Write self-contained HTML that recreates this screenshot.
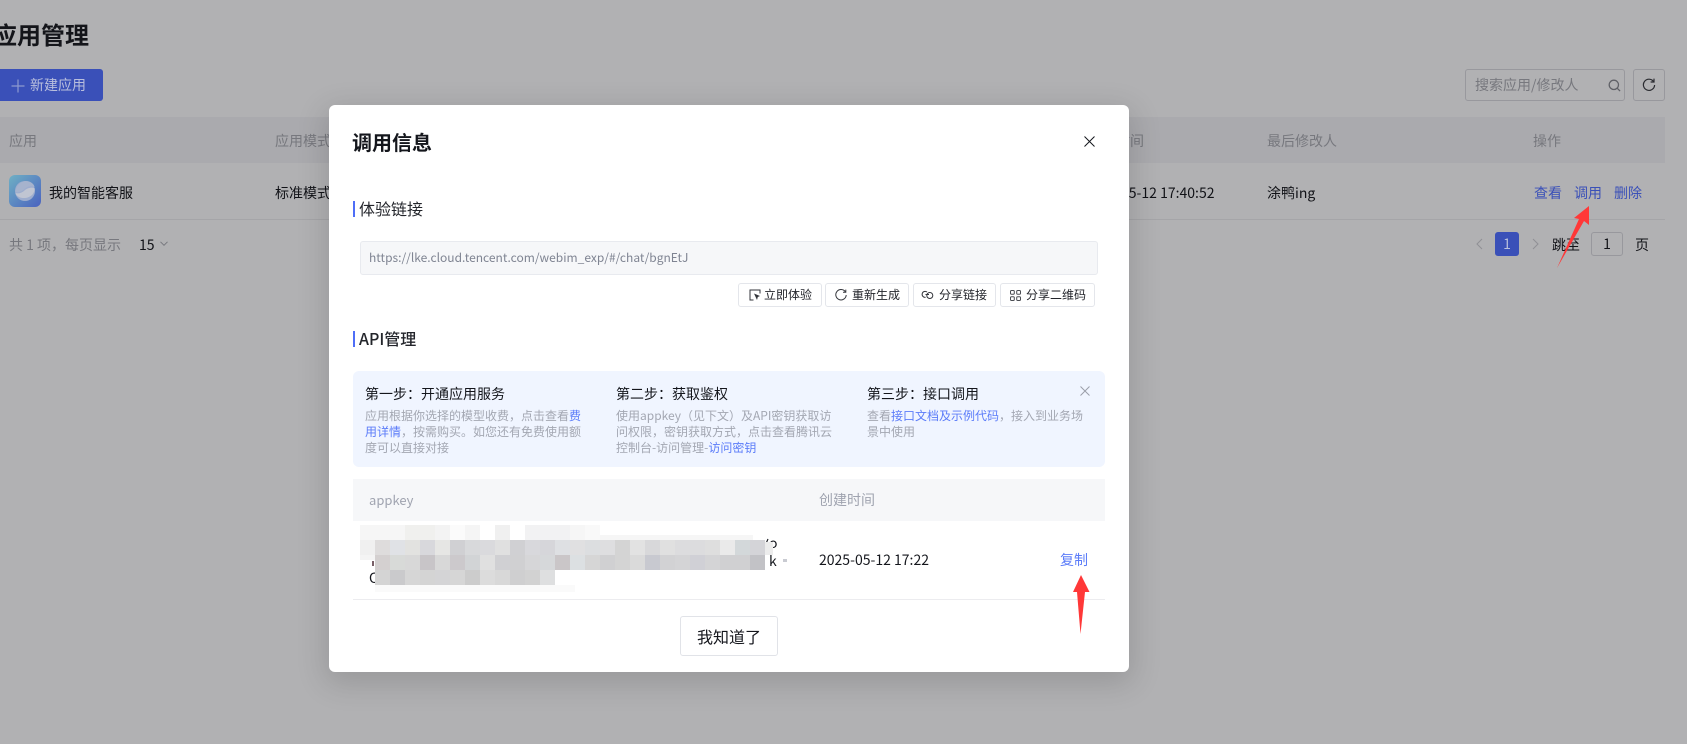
<!DOCTYPE html>
<html lang="zh">
<head>
<meta charset="utf-8">
<title>应用管理</title>
<style>
html,body{margin:0;padding:0}
body{width:1687px;height:744px;overflow:hidden;background:#b1b1b3;position:relative;font-family:"Noto Sans CJK SC","Liberation Sans",sans-serif;font-size:14px;color:#111217}
.t{position:absolute;white-space:nowrap;line-height:20px}
.b{position:absolute;box-sizing:border-box}
.hd{color:#77787e}
.lnk{color:#3a50b8}
.bt{position:absolute;box-sizing:border-box;height:24px;border:1px solid #e4e6eb;border-radius:3px;background:#fff}
.d{position:absolute;font-size:12px;line-height:16px;color:#a3a7b2;width:225px}
.d b{font-weight:400;color:#5b7cf9}
.s{position:absolute;font-size:14px;line-height:20px;color:#14161c;white-space:nowrap}
svg{position:absolute;overflow:visible}
</style>
</head>
<body>
<!-- background page -->
<div class="t" style="left:-7px;top:17px;font-size:24px;line-height:34px;font-weight:700;color:#14151a">应用管理</div>
<div class="b" style="left:-6px;top:69px;width:109px;height:32px;background:#3a50b8;border-radius:3px"></div>
<svg style="left:11px;top:79px" width="14" height="14" viewBox="0 0 14 14"><path d="M7 0.5V13.5M0.5 7H13.5" stroke="#8d99cf" stroke-width="1.2" fill="none"/></svg>
<div class="t" style="left:30px;top:75px;color:#b9bfdd">新建应用</div>

<div class="b" style="left:1465px;top:69px;width:160px;height:32px;border:1px solid #98989d;border-radius:3px"></div>
<div class="t" style="left:1475px;top:75px;color:#77787e">搜索应用/修改人</div>
<svg style="left:1608px;top:79px" width="13" height="13" viewBox="0 0 14 14"><circle cx="6.3" cy="6.3" r="5" fill="none" stroke="#606167" stroke-width="1.4"/><path d="M10 10L13 13" stroke="#606167" stroke-width="1.4"/></svg>
<div class="b" style="left:1633px;top:69px;width:32px;height:32px;border:1px solid #98989d;border-radius:3px"></div>
<svg style="left:1642px;top:78px" width="14" height="14" viewBox="0 0 14 14"><path d="M11.6 3.6A5.6 5.6 0 1 0 12.6 7" fill="none" stroke="#2a2b30" stroke-width="1.2"/><path d="M12 0.6V4H8.6" fill="none" stroke="#2a2b30" stroke-width="1.2"/></svg>

<div class="b" style="left:0;top:117px;width:1665px;height:46px;background:#aaaaae"></div>
<div class="t hd" style="left:9px;top:131px">应用</div>
<div class="t hd" style="left:275px;top:131px">应用模式</div>
<div class="t hd" style="left:1116px;top:131px">时间</div>
<div class="t hd" style="left:1267px;top:131px">最后修改人</div>
<div class="t hd" style="left:1533px;top:131px">操作</div>

<svg style="left:9px;top:175px" width="32" height="32" viewBox="0 0 32 32">
<defs><linearGradient id="g" x1="0" y1="0" x2="1" y2="1"><stop offset="0" stop-color="#6fb0c4"/><stop offset="1" stop-color="#4a62bf"/></linearGradient></defs>
<rect width="32" height="32" rx="6" fill="url(#g)"/>
<circle cx="16" cy="16" r="10" fill="#9eadce"/>
<path d="M6.5 17C7 11 12 6 17 6C21.500 6 25 9 25.600 12C22 10.500 18 11.500 15.500 14C13 16.500 9 18 6.500 17Z" fill="#a6b3cd"/>
<path d="M25.500 13C26 15 25 18 23 20C20 23 14 24 10 22C8 21 7 20 6.500 18C9 19 13 18 15.500 15.500C18 13 22 12 25.500 13Z" fill="#c0c5d2"/>
</svg>
<div class="t" style="left:49px;top:183px">我的智能客服</div>
<div class="t" style="left:275px;top:183px">标准模式</div>
<div class="t" style="left:1121px;top:183px">05-12 17:40:52</div>
<div class="t" style="left:1267px;top:183px">涂鸭ing</div>
<div class="t lnk" style="left:1534px;top:183px">查看</div>
<div class="t lnk" style="left:1574px;top:183px">调用</div>
<div class="t lnk" style="left:1614px;top:183px">删除</div>
<div class="b" style="left:0;top:219px;width:1665px;height:1px;background:#a5a5a8"></div>

<div class="t hd" style="left:9px;top:235px">共 1 项，每页显示</div>
<div class="t" style="left:139px;top:235px">15</div>
<svg style="left:160px;top:241px" width="8" height="6" viewBox="0 0 8 6"><path d="M0.500 0.800L4 4.300L7.500 0.800" fill="none" stroke="#77787e" stroke-width="1"/></svg>

<svg style="left:1476px;top:238px" width="7" height="12" viewBox="0 0 7 12"><path d="M6 1L1 6L6 11" fill="none" stroke="#909095" stroke-width="1"/></svg>
<div class="b" style="left:1495px;top:232px;width:24px;height:24px;background:#3a50b8;border-radius:3px;color:#b9bfdd;text-align:center;line-height:24px">1</div>
<svg style="left:1532px;top:238px" width="7" height="12" viewBox="0 0 7 12"><path d="M1 1L6 6L1 11" fill="none" stroke="#909095" stroke-width="1"/></svg>
<div class="t" style="left:1552px;top:235px">跳至</div>
<div class="b" style="left:1591px;top:232px;width:32px;height:24px;border:1px solid #98989d;border-radius:3px;text-align:center;line-height:22px">1</div>
<div class="t" style="left:1635px;top:235px">页</div>

<!-- modal -->
<div class="b" style="left:329px;top:105px;width:800px;height:567px;background:#fff;border-radius:6px;box-shadow:0 8px 30px 4px rgba(0,0,0,.14)"></div>
<div class="t" style="left:352px;top:128px;font-size:20px;line-height:28px;font-weight:700;color:#14161c">调用信息</div>
<svg style="left:1084px;top:136px" width="11" height="11" viewBox="0 0 11 11"><path d="M0.500 0.500L10.500 10.500M10.500 0.500L0.500 10.500" stroke="#14161c" stroke-width="1"/></svg>

<div class="b" style="left:353px;top:201px;width:2px;height:16px;background:#4f6ef7"></div>
<div class="t" style="left:359px;top:197px;font-size:16px;line-height:22px;color:#23252b">体验链接</div>
<div class="b" style="left:360px;top:241px;width:738px;height:34px;background:#f6f7f9;border:1px solid #e8eaef;border-radius:3px"></div>
<div class="t" style="left:369px;top:248px;font-size:12px;color:#7f8492">https://lke.cloud.tencent.com/webim_exp/#/chat/bgnEtJ</div>

<div class="bt" style="left:738px;top:283px;width:84px"></div>
<svg style="left:749px;top:289px" width="12" height="12" viewBox="0 0 12 12"><path d="M4.500 11H1V1H11V4.500" fill="none" stroke="#33353b" stroke-width="1"/><path d="M5 4.500L11 7L8.800 8L8 11Z" fill="#33353b"/></svg>
<div class="t" style="left:764px;top:285px;font-size:12px;color:#23252b">立即体验</div>
<div class="bt" style="left:825px;top:283px;width:84px"></div>
<svg style="left:835px;top:289px" width="12" height="12" viewBox="0 0 12 12"><path d="M10.300 2.800A5.200 5.200 0 1 0 11.200 6" fill="none" stroke="#33353b" stroke-width="1"/><path d="M10.800 0.600V3.300H8" fill="none" stroke="#33353b" stroke-width="1"/></svg>
<div class="t" style="left:852px;top:285px;font-size:12px;color:#23252b">重新生成</div>
<div class="bt" style="left:913px;top:283px;width:83px"></div>
<svg style="left:922px;top:290px" width="12" height="10" viewBox="0 0 12 10"><path d="M5 2A3 3 0 1 0 3.600 7.300" fill="none" stroke="#33353b" stroke-width="1"/><circle cx="7.800" cy="5.500" r="3" fill="none" stroke="#33353b" stroke-width="1"/><path d="M3.500 4.500H7" stroke="#33353b" stroke-width="1"/></svg>
<div class="t" style="left:939px;top:285px;font-size:12px;color:#23252b">分享链接</div>
<div class="bt" style="left:1000px;top:283px;width:95px"></div>
<svg style="left:1010px;top:290px" width="11" height="11" viewBox="0 0 11 11"><g fill="none" stroke="#4a4c52" stroke-width="1"><rect x="0.500" y="0.500" width="3.800" height="3.800" rx="1"/><rect x="6.700" y="0.500" width="3.800" height="3.800" rx="1"/><rect x="0.500" y="6.700" width="3.800" height="3.800" rx="1"/><rect x="6.700" y="6.700" width="3.800" height="3.800" rx="1"/></g></svg>
<div class="t" style="left:1026px;top:285px;font-size:12px;color:#23252b">分享二维码</div>

<div class="b" style="left:353px;top:331px;width:2px;height:16px;background:#4f6ef7"></div>
<div class="t" style="left:359px;top:327px;font-size:16px;line-height:22px;font-weight:500;color:#23252b">API管理</div>

<div class="b" style="left:353px;top:371px;width:752px;height:96px;background:#f0f5ff;border-radius:6px"></div>
<div class="s" style="left:365px;top:384px">第一步：开通应用服务</div>
<div class="d" style="left:365px;top:408px">应用根据你选择的模型收费，点击查看<b>费用详情</b>，按需购买。如您还有免费使用额度可以直接对接</div>
<div class="s" style="left:616px;top:384px">第二步：获取鉴权</div>
<div class="d" style="left:616px;top:408px">使用appkey（见下文）及API密钥获取访问权限，密钥获取方式，点击查看腾讯云控制台-访问管理-<b>访问密钥</b></div>
<div class="s" style="left:867px;top:384px">第三步：接口调用</div>
<div class="d" style="left:867px;top:408px;width:222px">查看<b>接口文档及示例代码</b>，接入到业务场景中使用</div>
<svg style="left:1080px;top:386px" width="10" height="10" viewBox="0 0 10 10"><path d="M0.500 0.500L9.500 9.500M9.500 0.500L0.500 9.500" stroke="#9a9ea9" stroke-width="1"/></svg>

<div class="b" style="left:353px;top:479px;width:752px;height:42px;background:#f6f7f9"></div>
<div class="t" style="left:369px;top:490px;font-size:13px;color:#a0a4b0">appkey</div>
<div class="t" style="left:819px;top:490px;color:#a0a4b0">创建时间</div>
<div class="b" style="left:353px;top:599px;width:752px;height:1px;background:#ececef"></div>
<div class="t" style="left:819px;top:550px;color:#14161c">2025-05-12 17:22</div>
<div class="t" style="left:1060px;top:550px;color:#5b7cf9">复制</div>

<div class="t" style="left:769px;top:533px;color:#14161c">o</div>
<svg style="left:0;top:0" width="1687" height="744" viewBox="0 0 1687 744"><path d="M768 539L764.500 547" stroke="#14161c" stroke-width="1.100"/><path d="M752.500 537V540" stroke="#14161c" stroke-width="1"/></svg>
<div class="t" style="left:369px;top:568px;color:#14161c">C</div>
<div class="b" style="left:372px;top:561px;width:2px;height:5px;background:#7a6068"></div>
<div class="t" style="left:769px;top:551px;color:#14161c">k</div>
<div class="b" style="left:783px;top:559px;width:4px;height:3px;background:#c9cbd2"></div>

<svg style="left:0;top:0" width="1687" height="744" viewBox="0 0 1687 744" shape-rendering="crispEdges">
<g transform="translate(360 525)">
<rect x="0" y="0" width="240" height="15" fill="#f6f6f6"/>
<rect x="45" y="0" width="30" height="15" fill="#f0f0ee"/><rect x="75" y="0" width="15" height="15" fill="#f3f3f3"/><rect x="90" y="0" width="15" height="15" fill="#fbfbfb"/><rect x="105" y="0" width="15" height="15" fill="#f5f5f5"/><rect x="120" y="0" width="15" height="15" fill="#fff"/><rect x="135" y="0" width="15" height="15" fill="#f0f0f0"/><rect x="150" y="0" width="15" height="15" fill="#fff"/><rect x="165" y="0" width="45" height="15" fill="#f2f2f3"/><rect x="225" y="0" width="15" height="15" fill="#f9f9f9"/>
<rect x="240" y="10" width="153" height="5" fill="#f6f6f6"/>
<rect x="405" y="17" width="8" height="13" fill="#ececec"/>
<rect x="0" y="15" width="15" height="15" fill="#f0f0f0"/>
<rect x="15" y="15" width="15" height="15" fill="#dedcdc"/><rect x="30" y="15" width="15" height="15" fill="#e0e2e6"/><rect x="45" y="15" width="15" height="15" fill="#e2e2e0"/><rect x="60" y="15" width="15" height="15" fill="#d8d8dc"/><rect x="75" y="15" width="15" height="15" fill="#e6e6e4"/><rect x="90" y="15" width="15" height="15" fill="#d0d0d3"/><rect x="105" y="15" width="15" height="15" fill="#d8d9db"/><rect x="120" y="15" width="15" height="15" fill="#dadadd"/><rect x="135" y="15" width="15" height="15" fill="#e0e0e0"/><rect x="150" y="15" width="15" height="15" fill="#d0d0d3"/><rect x="165" y="15" width="15" height="15" fill="#d8d8dc"/><rect x="180" y="15" width="15" height="15" fill="#d6d6da"/><rect x="195" y="15" width="15" height="15" fill="#dee0e3"/><rect x="210" y="15" width="15" height="15" fill="#e0e0e1"/><rect x="225" y="15" width="15" height="15" fill="#dcdee0"/><rect x="240" y="15" width="15" height="15" fill="#dedee0"/><rect x="255" y="15" width="15" height="15" fill="#d4d4d4"/><rect x="270" y="15" width="15" height="15" fill="#e2e2e2"/><rect x="285" y="15" width="15" height="15" fill="#d8d8da"/><rect x="300" y="15" width="15" height="15" fill="#e0e0e0"/><rect x="315" y="15" width="15" height="15" fill="#dcdcde"/><rect x="330" y="15" width="15" height="15" fill="#dcdcde"/><rect x="345" y="15" width="15" height="15" fill="#dedede"/><rect x="360" y="15" width="15" height="15" fill="#eaeaea"/><rect x="375" y="15" width="15" height="15" fill="#d3d8da"/><rect x="390" y="15" width="15" height="15" fill="#d4d4d8"/>
<rect x="0" y="30" width="15" height="5" fill="#f4f4f4"/>
<rect x="15" y="30" width="15" height="15" fill="#d4d0d0"/><rect x="30" y="30" width="15" height="15" fill="#d8dad8"/><rect x="45" y="30" width="15" height="15" fill="#d8d8d8"/><rect x="60" y="30" width="15" height="15" fill="#c8c5c8"/><rect x="75" y="30" width="15" height="15" fill="#d8d8d8"/><rect x="90" y="30" width="15" height="15" fill="#ccc9cc"/><rect x="105" y="30" width="15" height="15" fill="#d2d4d6"/><rect x="120" y="30" width="15" height="15" fill="#e0e0e0"/><rect x="135" y="30" width="15" height="15" fill="#d0d0d3"/><rect x="150" y="30" width="15" height="15" fill="#d0d0d2"/><rect x="165" y="30" width="15" height="15" fill="#d6d6d8"/><rect x="180" y="30" width="15" height="15" fill="#d6d8da"/><rect x="195" y="30" width="15" height="15" fill="#cac6c8"/><rect x="210" y="30" width="15" height="15" fill="#dce0e2"/><rect x="225" y="30" width="15" height="15" fill="#d6d6d6"/><rect x="240" y="30" width="15" height="15" fill="#d0d0d2"/><rect x="255" y="30" width="15" height="15" fill="#d4d4d4"/><rect x="270" y="30" width="15" height="15" fill="#dadada"/><rect x="285" y="30" width="15" height="15" fill="#c8c9d0"/><rect x="300" y="30" width="15" height="15" fill="#d2d2d4"/><rect x="315" y="30" width="15" height="15" fill="#d4d4d6"/><rect x="330" y="30" width="15" height="15" fill="#d0d0d6"/><rect x="345" y="30" width="15" height="15" fill="#d4d4d6"/><rect x="360" y="30" width="15" height="15" fill="#d0d0d2"/><rect x="375" y="30" width="15" height="15" fill="#d0d0d2"/><rect x="390" y="30" width="15" height="15" fill="#c2c2c6"/>
<rect x="15" y="45" width="15" height="15" fill="#d4d4d4"/><rect x="30" y="45" width="15" height="15" fill="#cacacc"/><rect x="45" y="45" width="15" height="15" fill="#d6d6d6"/><rect x="60" y="45" width="15" height="15" fill="#d4d4d4"/><rect x="75" y="45" width="15" height="15" fill="#d4d4d6"/><rect x="90" y="45" width="15" height="15" fill="#d6d6d6"/><rect x="105" y="45" width="15" height="15" fill="#cccccc"/><rect x="120" y="45" width="15" height="15" fill="#dcdcdc"/><rect x="135" y="45" width="15" height="15" fill="#d8d8d8"/><rect x="150" y="45" width="15" height="15" fill="#cfcfd0"/><rect x="165" y="45" width="15" height="15" fill="#d2d2d2"/><rect x="180" y="45" width="15" height="15" fill="#dedfe0"/>
<rect x="15" y="60" width="200" height="7" fill="#fafafa"/>
</g>
</svg>

<div class="b" style="left:680px;top:616px;width:98px;height:40px;border:1px solid #e1e3e8;border-radius:3px;background:#fff;text-align:center;line-height:38px;font-size:16px;color:#14161c">我知道了</div>

<!-- red arrows -->
<svg style="left:0;top:0" width="1687" height="744" viewBox="0 0 1687 744">
<path d="M1081 575L1089.500 592L1085 592L1080.500 634L1077 592L1073 592Z" fill="#ff3838"/>
<path d="M1589 206L1589 225L1584 221L1557 268L1579 219L1574 218Z" fill="#ff3838"/>
</svg>
</body>
</html>
